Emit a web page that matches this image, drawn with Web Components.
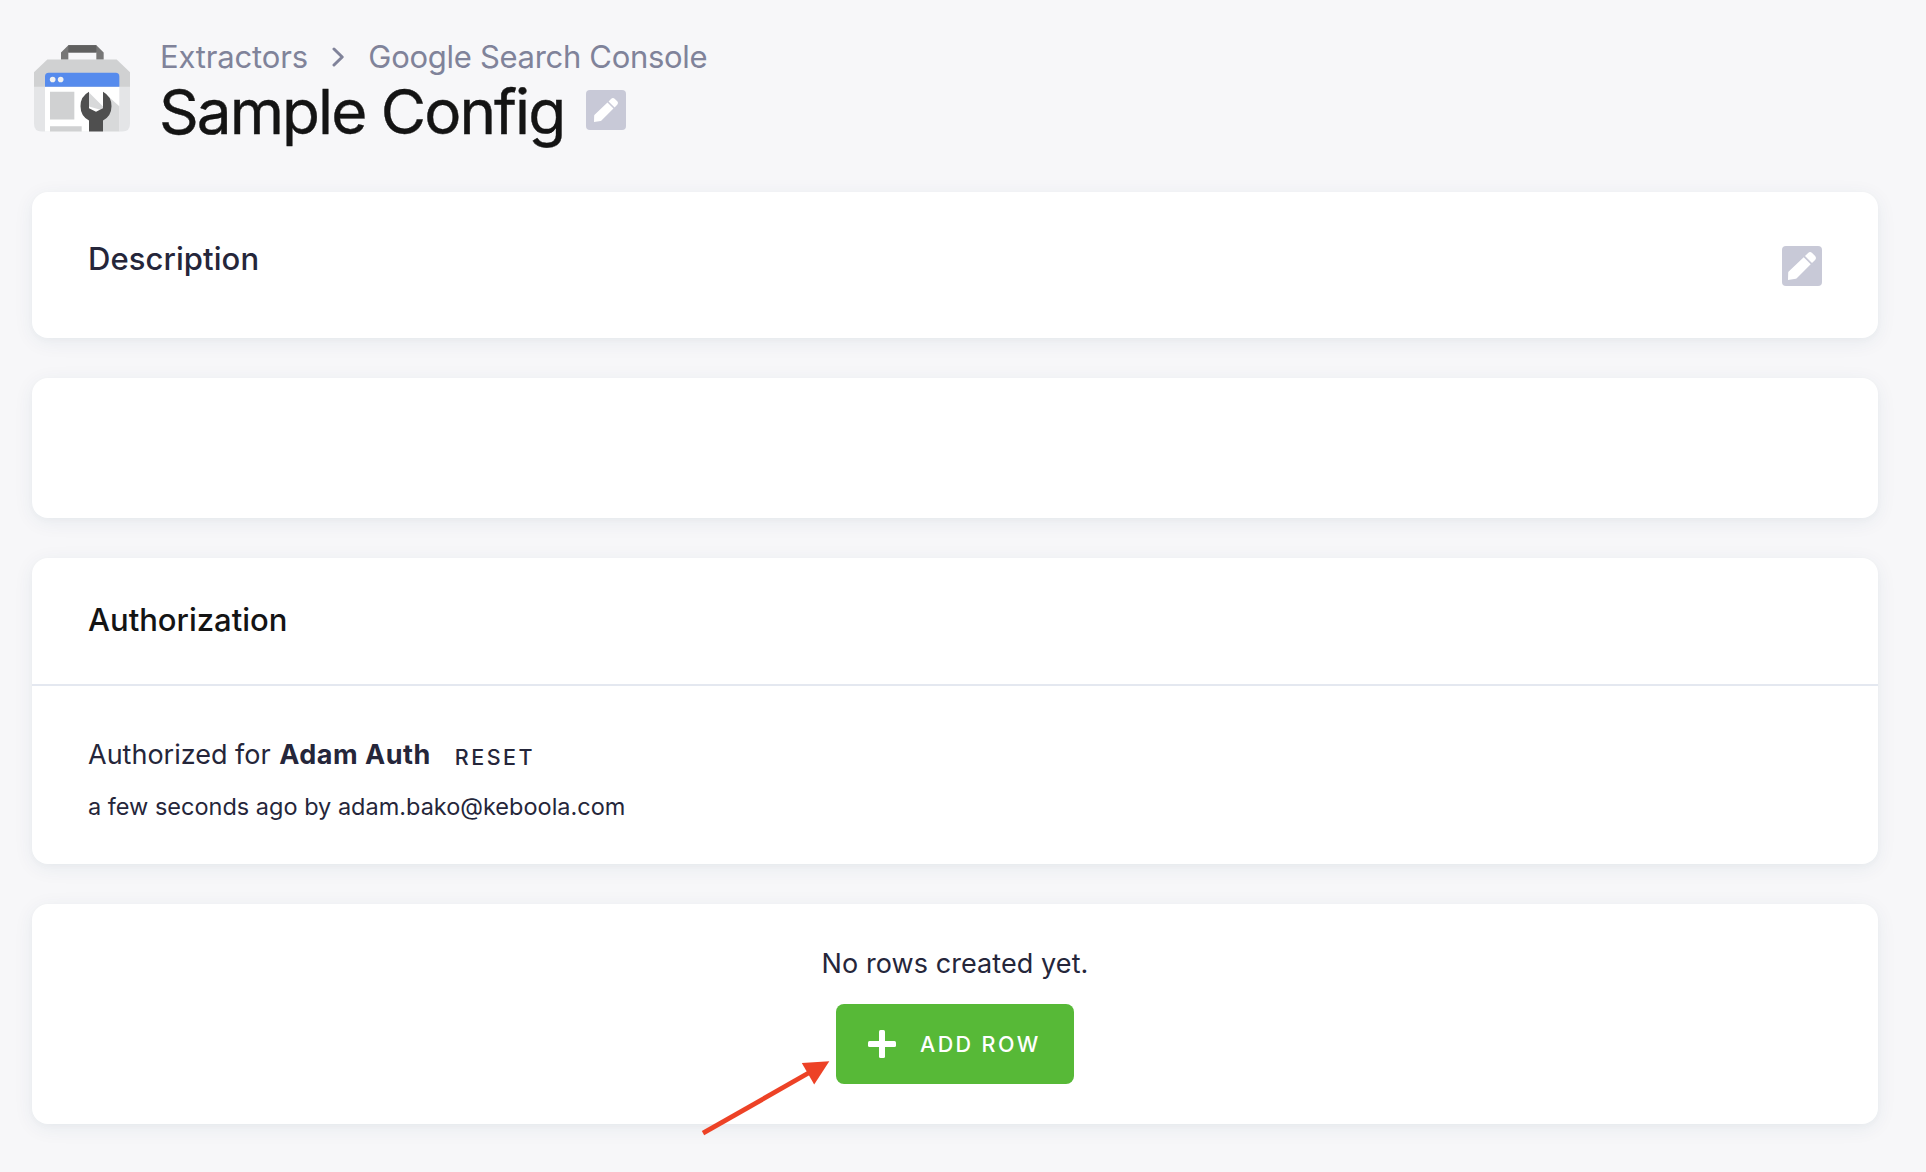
<!DOCTYPE html>
<html lang="en">
<head>
<meta charset="utf-8">
<title>Sample Config</title>
<style>
body{margin:0;background:#f7f7f9;font-family:Inter,"Liberation Sans",sans-serif;color:#25263a;height:1172px;overflow:hidden}
</style>
</head>
<body>
<config-page>
  <page-header slot="header">
    <console-logo slot="logo"></console-logo>
    <crumb-link slot="crumbs" style="letter-spacing:-.17px">Extractors</crumb-link>
    <crumb-separator slot="crumbs"></crumb-separator>
    <crumb-link slot="crumbs" style="letter-spacing:-.3px">Google Search Console</crumb-link>
    <span slot="title">Sample Config</span>
    <edit-button slot="edit" style="--glyph:24px"></edit-button>
  </page-header>
  <description-card>Description</description-card>
  <ui-card style="height:140px"></ui-card>
  <authorization-card>
    <span slot="title">Authorization</span>
    <span slot="name">Adam Auth</span>
    <span slot="meta">a few seconds ago by adam.bako@keboola.com</span>
  </authorization-card>
  <rows-card>
    <span slot="message">No rows created yet.</span>
    <add-button slot="action">ADD ROW</add-button>
    <pointer-arrow slot="note"></pointer-arrow>
  </rows-card>
</config-page>
<script>
const define = (name, html) => customElements.define(name, class extends HTMLElement {
  constructor() {
    super();
    this.attachShadow({ mode: 'open' }).innerHTML = html;
  }
});

define('config-page', `
<style>
:host{display:flex;flex-direction:column;box-sizing:border-box;padding:36px 48px 0 32px}
main{display:flex;flex-direction:column;gap:40px}
</style>
<slot name="header"></slot>
<main><slot></slot></main>`);

define('page-header', `
<style>
:host{display:flex;height:156px}
.logo{flex:none;width:128px;padding:8.7px 0 0 2px;box-sizing:border-box}
.crumbs{display:flex;align-items:center;height:41px;padding-top:1px;box-sizing:border-box}
.title{display:flex;align-items:center;height:70px}
h1{margin:0 21.5px 0 -1px;font-size:62px;line-height:70px;font-weight:400;letter-spacing:-1.950px;color:#141414;white-space:nowrap;width:405.500px;-webkit-text-stroke:.4px #141414}
.edit{display:flex;margin-top:-4px}
</style>
<div class="logo"><slot name="logo"></slot></div>
<div>
  <div class="crumbs"><slot name="crumbs"></slot></div>
  <div class="title"><h1><slot name="title"></slot></h1><div class="edit"><slot name="edit"></slot></div></div>
</div>`);

define('crumb-link', `
<style>:host{display:block;font-size:31px;line-height:40px;color:#80839a;white-space:nowrap}</style>
<slot></slot>`);

define('crumb-separator', `
<style>:host{display:flex;margin:0 24.500px 0 24px}svg{display:block}</style>
<svg width="12" height="20" viewBox="0 0 12 20" fill="none" stroke="#80839a" stroke-width="3" stroke-linecap="round" stroke-linejoin="round"><path d="M2 2l8.2 8L2 18"/></svg>`);

define('console-logo', `
<style>:host{display:block}svg{display:block}</style>
<svg width="96" height="87" viewBox="42 43.5 288 261">
  <path d="M123 88V66l22-22h84l22 22v22h-22V66h-84v22z" fill="#777"/>
  <path d="M145 44h84v22h-84z" fill="#606060"/>
  <path d="M82 87h208l40 38v45H42v-45z" fill="#d0d1d2"/>
  <path d="M42 169h288v111q0 23-23 23H65q-23 0-23-23z" fill="#e4e5e7"/>
  <path d="M75 169h223v134H75z" fill="#fff"/>
  <path d="M75 169v-31q0-11 11-11h201q11 0 11 11v31z" fill="#568bed"/>
  <circle cx="98" cy="147" r="8.5" fill="#f1f1f1"/><circle cx="122" cy="147" r="8.5" fill="#f1f1f1"/>
  <path d="M90 184h73v83H90zM90 287h95v16H90z" fill="#d0d1d2"/>
  <path d="M207 186l42 42V184l49 43v76h-49V240l-42-12z" fill="#d8d9da"/>
  <path d="M207 184v49l21 11 21-11v-49a49 49 0 0 1 0 86v33h-42v-33a49 49 0 0 1 0-86z" fill="#4f4f4f"/>
</svg>`);

define('edit-button', `
<style>
:host{display:flex;align-items:center;justify-content:center;width:40px;height:40px;border-radius:4px;background:#c8c9d7}
svg{display:block;width:var(--glyph,28px);height:var(--glyph,28px)}
</style>
<svg viewBox="0 0 28 28" fill="#fff"><path d="M15.7 5.3l7 7L9 26q-.5.6-1.200.8L0 28l.2-7.300q0-.7.5-1.200zM17 4l3.100-3.100q2-1.700 4 0l3 3q1.700 2 0 4L24 11z"/></svg>`);

define('ui-card', `
<style>:host{display:block;box-sizing:border-box;background:#fff;border-radius:16px;box-shadow:0 4px 20px rgba(35,70,100,.07),0 2px 6px rgba(35,70,100,.025)}</style>
<slot></slot>`);

define('description-card', `
<style>
:host{display:block}
ui-card{height:146px}
.row{display:flex;justify-content:space-between;padding:46px 56px 0}
h2{margin:1px 0 0;font-size:31px;font-weight:500;line-height:40px;letter-spacing:.08px}
edit-button{margin-top:8px}
</style>
<ui-card><div class="row"><h2><slot></slot></h2><edit-button></edit-button></div></ui-card>`);

define('authorization-card', `
<style>
:host{display:block}
ui-card{height:306px}
header{height:128px;padding:42px 56px 0;box-sizing:border-box;border-bottom:2px solid #e4e8f0}
h2{margin:0;font-size:31px;font-weight:500;line-height:40px;color:#141414}
section{padding:49px 56px 0}
.who{display:flex;align-items:baseline;font-size:27px;line-height:40px;white-space:pre}
b{font-weight:700;letter-spacing:.5px;margin-left:1px}
.reset{font-size:21.5px;font-weight:500;letter-spacing:2.500px;margin-left:24px;position:relative;top:1px}
.meta{font-size:23.5px;line-height:32px;margin-top:15px}
</style>
<ui-card>
  <header><h2><slot name="title"></slot></h2></header>
  <section>
    <div class="who"><span>Authorized for </span><b><slot name="name"></slot></b><span class="reset">RESET</span></div>
    <div class="meta"><slot name="meta"></slot></div>
  </section>
</ui-card>`);

define('rows-card', `
<style>
:host{display:block;position:relative}
ui-card{height:220px;padding-top:40px}
.stack{display:flex;flex-direction:column;align-items:center;gap:20px}
.msg{font-size:27px;line-height:40px;letter-spacing:.08px}
</style>
<ui-card><div class="stack"><div class="msg"><slot name="message"></slot></div><slot name="action"></slot></div></ui-card>
<slot name="note"></slot>`);

define('add-button', `
<style>
:host{display:flex;align-items:center;box-sizing:border-box;width:238px;height:80px;padding-left:32px;gap:24px;border-radius:8px;background:#57b937;color:#fff;font-size:21.5px;font-weight:500;letter-spacing:2.400px;white-space:nowrap}
svg{display:block;flex:none}
</style>
<svg width="28" height="28" viewBox="0 0 28 28" fill="#fff"><rect x="11" width="6" height="28" rx="1.500"/><rect y="11" width="28" height="6" rx="1.500"/></svg>
<span><slot></slot></span>`);

define('pointer-arrow', `
<style>:host{display:block;position:absolute;left:668px;top:154px}svg{display:block}</style>
<svg width="132" height="84" viewBox="700 1058 132 84"><path d="M703 1133.200L812 1071" stroke="#ed4226" stroke-width="4.800"/><path d="M829.300 1061.200L801.800 1063l12.400 21.500z" fill="#ed4226"/></svg>`);
</script>
</body>
</html>
